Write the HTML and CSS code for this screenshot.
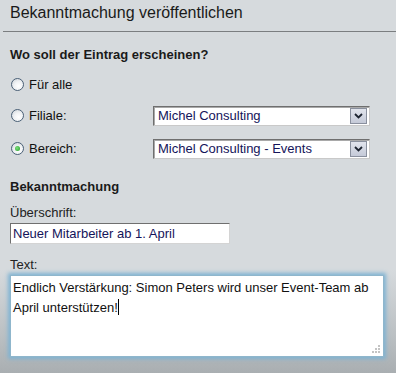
FILE: index.html
```html
<!DOCTYPE html>
<html lang="de">
<head>
    <meta charset="UTF-8">
    <title>Bekanntmachung veröffentlichen</title>
    <link rel="stylesheet" href="styles.css">
</head>
<body>
    <div class="header">
        <h1>Bekanntmachung veröffentlichen</h1>
    </div>

    <div class="content">
        <h2>Wo soll der Eintrag erscheinen?</h2>

        <div class="row">
            <label class="choice"><span class="radio"></span>Für alle</label>
        </div>
        <div class="row">
            <label class="choice"><span class="radio"></span>Filiale:</label>
            <div class="select">
                <span class="select-text">Michel Consulting</span>
                <span class="select-btn">
                    <svg width="9" height="6" viewBox="0 0 9 6"><path d="M1 1 L4.5 4.5 L8 1" fill="none" stroke="#1d2430" stroke-width="1.8"/></svg>
                </span>
            </div>
        </div>
        <div class="row">
            <label class="choice"><span class="radio checked"></span>Bereich:</label>
            <div class="select">
                <span class="select-text">Michel Consulting - Events</span>
                <span class="select-btn">
                    <svg width="9" height="6" viewBox="0 0 9 6"><path d="M1 1 L4.5 4.5 L8 1" fill="none" stroke="#1d2430" stroke-width="1.8"/></svg>
                </span>
            </div>
        </div>

        <h2 class="second">Bekanntmachung</h2>

        <label class="field-label">Überschrift:</label>
        <div class="input">Neuer Mitarbeiter ab 1. April</div>

        <label class="field-label text-label">Text:</label>
        <div class="textarea">
            Endlich Verstärkung: Simon Peters wird unser Event-Team ab April unterstützen!<span class="caret"></span>
            <svg class="grip" width="9" height="9" viewBox="0 0 9 9" fill="#c4c4c4">
                <rect x="6" y="0" width="2" height="2"/>
                <rect x="3" y="3" width="2" height="2"/><rect x="6" y="3" width="2" height="2"/>
                <rect x="0" y="6" width="2" height="2"/><rect x="3" y="6" width="2" height="2"/><rect x="6" y="6" width="2" height="2"/>
            </svg>
        </div>
    </div>
</body>
</html>
```

FILE: styles.css
```css
body {
    font-family: 'Liberation Sans', Arial, sans-serif;
    margin: 0;
    padding: 0;
    width: 396px;
    height: 373px;
    overflow: hidden;
    color: #111;
    background: linear-gradient(#d6dadd 0, #d6dadd 270px, #b9bec1 340px, #a9aeb1 373px);
}

.header {
    height: 31px;
    margin-left: 3px;
    border-bottom: 1px solid #7b7e80;
}

h1 {
    margin: 0;
    padding: 4px 0 0 7px;
    font-size: 16px;
    font-weight: normal;
    color: #1a1a1a;
}

.content {
    padding: 15px 10px 0 10px;
}

h2 {
    margin: 0 0 12px 0;
    font-size: 13px;
    font-weight: bold;
    color: #1a1a1a;
}

h2.second {
    margin: 14px 0 11px 0;
}

.row {
    display: flex;
    align-items: center;
    height: 33px;
}

.row:first-of-type {
    height: 20px;
    margin-bottom: 5px;
}

.choice {
    display: flex;
    align-items: center;
    width: 143px;
    font-size: 13px;
}

.radio {
    width: 11px;
    height: 11px;
    border: 1px solid #4a6076;
    border-radius: 50%;
    margin: 0 5px 0 1px;
    background: radial-gradient(circle at 60% 65%, #ffffff 0, #f0f2f4 45%, #c9ced4 100%);
    position: relative;
}

.radio.checked::after {
    content: "";
    position: absolute;
    left: 3px;
    top: 3px;
    width: 5px;
    height: 5px;
    border-radius: 50%;
    background: radial-gradient(circle at 40% 40%, #7ee07e, #1f9a22);
}

.select {
    display: flex;
    align-items: center;
    width: 211px;
    height: 18px;
    background-color: white;
    border: 1px solid #c9c9c9;
    border-top-color: #6f6f6f;
    border-left-color: #6f6f6f;
    box-shadow: inset 1px 1px 0 #a9a9a9;
    padding-left: 4px;
    font-size: 13px;
    color: #14145a;
}

.select-text {
    flex: 1;
}

.select-btn {
    display: flex;
    align-items: center;
    justify-content: center;
    width: 15px;
    height: 14px;
    margin-right: 2px;
    background: linear-gradient(#e1e4ec, #c5cad8);
    border: 1px solid #8a909e;
}

.field-label {
    display: block;
    font-size: 13px;
    color: #222;
    margin-bottom: 3px;
}

.input {
    width: 216px;
    height: 19px;
    line-height: 19px;
    padding-left: 2px;
    background-color: white;
    border: 1px solid #d4d4d4;
    border-top-color: #6f6f6f;
    border-left-color: #6f6f6f;
    font-size: 13px;
    color: #14145a;
}

.text-label {
    margin-top: 13px;
}

.textarea {
    position: relative;
    width: 370px;
    height: 78px;
    margin-top: 2px;
    padding: 0 0 0 2px;
    background-color: white;
    border: 1px solid #8fb6cc;
    box-shadow: 0 0 4px 2px #7eb3d3;
    font-size: 13px;
    line-height: 20px;
    padding-top: 2px;
    color: #111;
}

.caret {
    display: inline-block;
    width: 1px;
    height: 16px;
    background-color: #000;
    vertical-align: -3px;
}

.grip {
    position: absolute;
    right: 2px;
    bottom: 2px;
}
```
